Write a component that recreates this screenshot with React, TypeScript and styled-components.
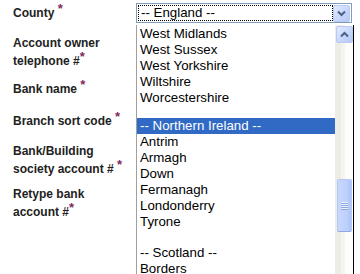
import React from "react";
import styled, {createGlobalStyle} from "styled-components";

const GlobalStyle = createGlobalStyle`
  body {
    margin: 0;
    background: #ffffff;
  }
`;

const Page = styled.div`
  width: 360px;
  height: 274px;
  overflow: hidden;
  position: relative;
  font-family: "Liberation Sans", Arial, sans-serif;
`;

const Form = styled.div`
  display: flex;
  flex-direction: column;
  padding: 4px 0 0 13px;
`;

const Row = styled.div<{$gap: number}>`
  display: grid;
  grid-template-columns: 123px 1fr;
  align-items: start;
  margin-bottom: ${(p) => p.$gap}px;
`;

const Label = styled.div`
  font-size: 12px;
  font-weight: bold;
  line-height: 18px;
  color: #222222;
`;

const Req = styled.span`
  color: #7f2a5c;
  font-size: 13px;
  position: relative;
  top: -4px;
`;

const SelectWrap = styled.div`
  position: relative;
  margin-top: -1px;
`;

const SelectBox = styled.div`
  box-sizing: border-box;
  width: 216px;
  height: 20px;
  border: 1px solid #7f9db9;
  display: flex;
  align-items: center;
  padding: 1px;
  background: #ffffff;
`;

const SelectText = styled.div`
  flex: 1;
  height: 16px;
  border: 1px dotted #000000;
  box-sizing: border-box;
  font-size: 13.3px;
  line-height: 14px;
  padding-left: 2px;
  color: #000000;
`;

const XpButton = styled.div`
  box-sizing: border-box;
  width: 17px;
  height: 17px;
  border: 1px solid #b7c9f4;
  border-radius: 2px;
  background: linear-gradient(135deg, #e2ebfe 0%, #c6d5fb 60%, #b6c8f6 100%);
  display: flex;
  align-items: center;
  justify-content: center;
`;

const DropList = styled.div`
  position: absolute;
  top: 22px;
  left: 0;
  width: 218px;
  height: 260px;
  box-sizing: border-box;
  border-left: 1px solid #a0a0a0;
  border-right: 1px solid #000000;
  background: #ffffff;
  display: flex;
`;

const Options = styled.div`
  flex: 1;
  display: flex;
  flex-direction: column;
  padding-top: 1px;
`;

const Option = styled.div<{$selected?: boolean; $h?: number}>`
  height: ${(p) => p.$h ?? 16}px;
  line-height: 16px;
  padding-left: 3px;
  font-size: 13.3px;
  color: ${(p) => (p.$selected ? "#ffffff" : "#000000")};
  background: ${(p) => (p.$selected ? "#316ac5" : "transparent")};
  white-space: nowrap;
`;

const ScrollTrack = styled.div`
  width: 18px;
  display: flex;
  flex-direction: column;
  align-items: center;
  padding-top: 1px;
  background: linear-gradient(
    to right,
    #eeede5 0,
    #eeede5 6px,
    #f5f4ef 6px,
    #f5f4ef 10px,
    #fdfdfb 10px
  );
`;

const Thumb = styled.div`
  box-sizing: border-box;
  width: 15px;
  height: 53px;
  margin-top: 136px;
  border: 1px solid #b4c8f6;
  border-bottom-color: #8fa8e8;
  border-radius: 2px;
  background: linear-gradient(to right, #c8d7fd 0%, #bccffc 70%, #aec3f6 100%);
  display: flex;
  flex-direction: column;
  align-items: center;
  justify-content: center;
  gap: 1px;
`;

const Grip = styled.div`
  width: 7px;
  height: 1px;
  background: #eef3fe;
  box-shadow: 0 1px 0 #8ca4e0;
`;

const Chevron: React.FC<{up?: boolean}> = ({up}) => (
  <svg width="9" height="7" viewBox="0 0 9 7">
    <path
      d={up ? "M1 5.5 L4.5 2 L8 5.5" : "M1 1.5 L4.5 5 L8 1.5"}
      fill="none"
      stroke="#4d6185"
      strokeWidth="2"
    />
  </svg>
);

type Item = {text: string; selected?: boolean; h?: number};

const items: Item[] = [
  {text: "West Midlands"},
  {text: "West Sussex"},
  {text: "West Yorkshire"},
  {text: "Wiltshire"},
  {text: "Worcestershire"},
  {text: "", h: 12},
  {text: "-- Northern Ireland --", selected: true},
  {text: "Antrim"},
  {text: "Armagh"},
  {text: "Down"},
  {text: "Fermanagh"},
  {text: "Londonderry"},
  {text: "Tyrone"},
  {text: "", h: 15},
  {text: "-- Scotland --"},
  {text: "Borders"},
];

export default function App() {
  return (
    <Page>
      <GlobalStyle />
      <Form>
        <Row $gap={11}>
          <Label>
            County <Req>*</Req>
          </Label>
          <SelectWrap>
            <SelectBox>
              <SelectText>-- England --</SelectText>
              <XpButton>
                <Chevron />
              </XpButton>
            </SelectBox>
            <DropList>
              <Options>
                {items.map((it, i) => (
                  <Option key={i} $selected={it.selected} $h={it.h}>
                    {it.text}
                  </Option>
                ))}
              </Options>
              <ScrollTrack>
                <XpButton>
                  <Chevron up />
                </XpButton>
                <Thumb>
                  <Grip />
                  <Grip />
                  <Grip />
                  <Grip />
                </Thumb>
              </ScrollTrack>
            </DropList>
          </SelectWrap>
        </Row>
        <Row $gap={10}>
          <Label>
            Account owner
            <br />
            telephone #<Req>*</Req>
          </Label>
        </Row>
        <Row $gap={14}>
          <Label>
            Bank name <Req>*</Req>
          </Label>
        </Row>
        <Row $gap={12}>
          <Label>
            Branch sort code <Req>*</Req>
          </Label>
        </Row>
        <Row $gap={7}>
          <Label>
            Bank/Building
            <br />
            society account # <Req>*</Req>
          </Label>
        </Row>
        <Row $gap={0}>
          <Label>
            Retype bank
            <br />
            account #<Req>*</Req>
          </Label>
        </Row>
      </Form>
    </Page>
  );
}
